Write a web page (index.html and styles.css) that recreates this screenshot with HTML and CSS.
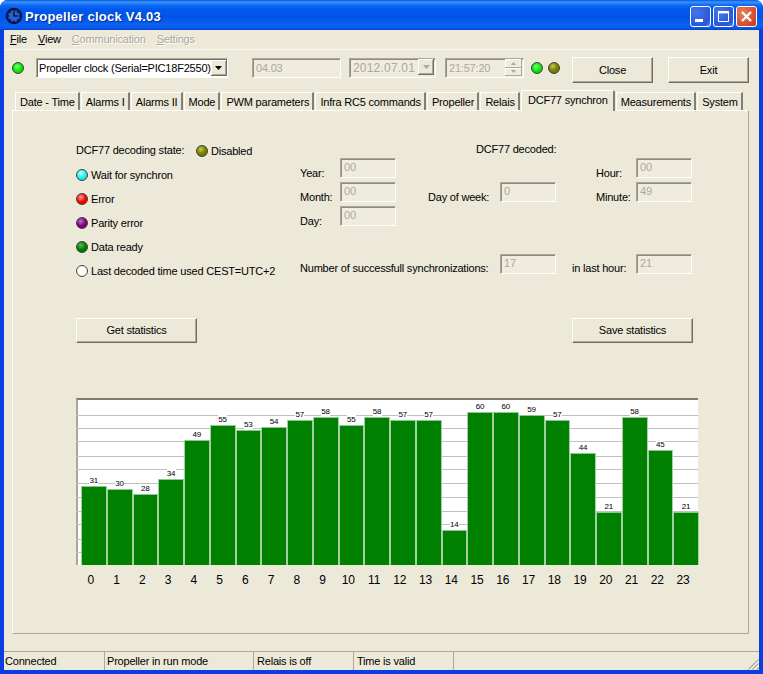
FILE: index.html
```html
<!DOCTYPE html>
<html lang="en">
<head>
<meta charset="utf-8">
<title>Propeller clock V4.03</title>
<link rel="stylesheet" href="styles.css">
</head>
<body>
<div class="window">
  <header class="titlebar">
    <svg class="app-icon" width="18" height="18" viewBox="0 0 18 18">
      <circle cx="9" cy="9" r="7.5" fill="#0b2a78" stroke="#06123c" stroke-width="1.4"/>
      <circle cx="9" cy="9" r="5.6" fill="#2a62d8"/>
      <path d="M9 2.5v2M9 13.5v2M2.5 9h2M13.5 9h2M4.4 4.4l1.4 1.4M12.2 12.2l1.4 1.4M13.6 4.4l-1.4 1.4M5.8 12.2l-1.4 1.4" stroke="#06123c" stroke-width="1.2"/>
      <path d="M9 4.8V9h3.6" fill="none" stroke="#06123c" stroke-width="1.5"/>
    </svg>
    <span class="title-text">Propeller clock V4.03</span>
    <div class="caption-buttons">
      <div class="cap cap-min"><svg width="19" height="19" viewBox="0 0 19 19"><rect x="4" y="12" width="8" height="3" fill="#fff"/></svg></div>
      <div class="cap cap-max"><svg width="19" height="19" viewBox="0 0 19 19"><path d="M4.5 5.5h10v9h-10z" fill="none" stroke="#fff"/><rect x="4" y="4" width="11" height="2.4" fill="#fff"/></svg></div>
      <div class="cap cap-close"><svg width="19" height="19" viewBox="0 0 19 19"><path d="M5 5l9 9M14 5l-9 9" stroke="#fff" stroke-width="2.4"/></svg></div>
    </div>
  </header>

  <div class="client">
    <nav class="menu">
      <span class="menu-item"><u>F</u>ile</span>
      <span class="menu-item"><u>V</u>iew</span>
      <span class="menu-item off"><u>C</u>ommunication</span>
      <span class="menu-item off"><u>S</u>ettings</span>
    </nav>

    <div class="toolbar">
      <span class="led led-lime led-first"></span>
      <div class="combo"><span class="combo-text">Propeller clock (Serial=PIC18F2550)</span><span class="arrow-btn"><svg width="7" height="4" viewBox="0 0 7 4"><path d="M0 0h7L3.5 4z" fill="#000"/></svg></span></div>
      <div class="field tool-field field-version">04.03</div>
      <div class="field tool-field field-date"><span>2012.07.01</span><span class="arrow-btn arrow-off"><svg width="7" height="4" viewBox="0 0 7 4"><path d="M0 0h7L3.5 4z" fill="#aca899"/></svg></span></div>
      <div class="field tool-field field-time"><span>21:57:20</span><span class="spin"><i class="spin-part"><svg width="5" height="3" viewBox="0 0 5 3"><path d="M0 3h5L2.5 0z" fill="#aca899"/></svg></i><i class="spin-part"><svg width="5" height="3" viewBox="0 0 5 3"><path d="M0 0h5L2.5 3z" fill="#aca899"/></svg></i></span></div>
      <span class="led led-lime led-a"></span>
      <span class="led led-olive led-b"></span>
      <div class="btn btn-close">Close</div>
      <div class="btn btn-exit">Exit</div>
    </div>

    <div class="tabs">
      <span class="tab">Date - Time</span>
      <span class="tab">Alarms I</span>
      <span class="tab">Alarms II</span>
      <span class="tab">Mode</span>
      <span class="tab">PWM parameters</span>
      <span class="tab">Infra RC5 commands</span>
      <span class="tab">Propeller</span>
      <span class="tab">Relais</span>
      <span class="tab active">DCF77 synchron</span>
      <span class="tab">Measurements</span>
      <span class="tab">System</span>
    </div>

    <main class="panel">
      <section class="form">
        <div class="states">
          <div class="state-row"><span class="state-head">DCF77 decoding state:</span><span class="led led-olive"></span><span>Disabled</span></div>
          <div class="state-row"><span class="led led-aqua"></span><span>Wait for synchron</span></div>
          <div class="state-row"><span class="led led-red"></span><span>Error</span></div>
          <div class="state-row"><span class="led led-purple"></span><span>Parity error</span></div>
          <div class="state-row"><span class="led led-green"></span><span>Data ready</span></div>
          <div class="state-row"><span class="led led-white"></span><span>Last decoded time used CEST=UTC+2</span></div>
        </div>
        <div class="decoded">
          <span class="decoded-head">DCF77 decoded:</span>

          <span class="lbl c1 r2">Year:</span><div class="field c2 r2">00</div>
          <span class="lbl c7 r2">Hour:</span><div class="field c8 r2">00</div>

          <span class="lbl c1 r3">Month:</span><div class="field c2 r3">00</div>
          <span class="lbl c4 r3">Day of week:</span><div class="field c5 r3">0</div>
          <span class="lbl c7 r3">Minute:</span><div class="field c8 r3">49</div>

          <span class="lbl c1 r4">Day:</span><div class="field c2 r4">00</div>

          <span class="lbl count-lbl r6">Number of successfull synchronizations:</span><div class="field c5 r6">17</div>
          <span class="lbl hour-lbl r6">in last hour:</span><div class="field c8 r6">21</div>
        </div>
      </section>

      <div class="actions">
        <div class="btn btn-wide">Get statistics</div>
        <div class="btn btn-wide">Save statistics</div>
      </div>

      <section class="chart">
        <div class="plot">
          <i class="grid" style="top:15px"></i><i class="grid" style="top:28px"></i><i class="grid" style="top:41px"></i><i class="grid" style="top:56px"></i><i class="grid" style="top:69px"></i><i class="grid" style="top:83px"></i><i class="grid" style="top:97px"></i><i class="grid" style="top:111px"></i><i class="grid" style="top:124px"></i><i class="grid" style="top:139px"></i><i class="grid" style="top:152px"></i>
          <div class="bars">
            <div class="col"><span class="val">31</span><div class="bar" style="height:79px"></div></div>
            <div class="col"><span class="val">30</span><div class="bar" style="height:76px"></div></div>
            <div class="col"><span class="val">28</span><div class="bar" style="height:71px"></div></div>
            <div class="col"><span class="val">34</span><div class="bar" style="height:86px"></div></div>
            <div class="col"><span class="val">49</span><div class="bar" style="height:125px"></div></div>
            <div class="col"><span class="val">55</span><div class="bar" style="height:140px"></div></div>
            <div class="col"><span class="val">53</span><div class="bar" style="height:135px"></div></div>
            <div class="col"><span class="val">54</span><div class="bar" style="height:138px"></div></div>
            <div class="col"><span class="val">57</span><div class="bar" style="height:145px"></div></div>
            <div class="col"><span class="val">58</span><div class="bar" style="height:148px"></div></div>
            <div class="col"><span class="val">55</span><div class="bar" style="height:140px"></div></div>
            <div class="col"><span class="val">58</span><div class="bar" style="height:148px"></div></div>
            <div class="col"><span class="val">57</span><div class="bar" style="height:145px"></div></div>
            <div class="col"><span class="val">57</span><div class="bar" style="height:145px"></div></div>
            <div class="col"><span class="val">14</span><div class="bar" style="height:35px"></div></div>
            <div class="col"><span class="val">60</span><div class="bar" style="height:153px"></div></div>
            <div class="col"><span class="val">60</span><div class="bar" style="height:153px"></div></div>
            <div class="col"><span class="val">59</span><div class="bar" style="height:150px"></div></div>
            <div class="col"><span class="val">57</span><div class="bar" style="height:145px"></div></div>
            <div class="col"><span class="val">44</span><div class="bar" style="height:112px"></div></div>
            <div class="col"><span class="val">21</span><div class="bar" style="height:53px"></div></div>
            <div class="col"><span class="val">58</span><div class="bar" style="height:148px"></div></div>
            <div class="col"><span class="val">45</span><div class="bar" style="height:115px"></div></div>
            <div class="col"><span class="val">21</span><div class="bar" style="height:53px"></div></div>
          </div>
        </div>
        <div class="axis">
          <span>0</span><span>1</span><span>2</span><span>3</span><span>4</span><span>5</span><span>6</span><span>7</span><span>8</span><span>9</span><span>10</span><span>11</span><span>12</span><span>13</span><span>14</span><span>15</span><span>16</span><span>17</span><span>18</span><span>19</span><span>20</span><span>21</span><span>22</span><span>23</span>
        </div>
      </section>
    </main>

    <footer class="status">
      <span class="cell cell-a">Connected</span>
      <span class="cell cell-b">Propeller in run mode</span>
      <span class="cell cell-c">Relais is off</span>
      <span class="cell cell-c">Time is valid</span>
      <span class="cell cell-rest"><svg class="grip" width="12" height="12" viewBox="0 0 12 12"><path d="M11.5 1.5L1.5 11.5M11.5 5.5L5.5 11.5M11.5 9.5L9.5 11.5" stroke="#aca899" stroke-width="1.2"/><path d="M11.5 3.5L3.5 11.5M11.5 7.5L7.5 11.5" stroke="#fff" stroke-width="1"/></svg></span>
    </footer>
  </div>
</div>
</body>
</html>
```

FILE: styles.css
```css
* { box-sizing: border-box; }
html, body { margin: 0; padding: 0; background: #fff; }
body { font-family: "Liberation Sans", Arial, sans-serif; font-size: 11px; letter-spacing: -.2px; color: #000; }

.window {
  width: 763px; height: 674px; overflow: hidden;
  display: flex; flex-direction: column;
  border-radius: 8px 8px 0 0;
  background: #0a3ee0;
}

/* Title bar */
.titlebar {
  height: 30px; flex: none;
  display: flex; align-items: center;
  padding: 0 6px 0 5px;
  background: linear-gradient(180deg, #0a55d8 0, #3a93ff 2px, #0f6cf2 5px, #0058ee 9px, #0055e5 18px, #0a62f2 25px, #0a5ae8 28px, #0340cc 30px);
}
.app-icon { flex: none; margin-top: 2px; }
.title-text {
  margin-left: 2px; margin-top: 3px;
  font-size: 13px; font-weight: 700; letter-spacing: .25px; color: #fff;
  text-shadow: 1px 1px 1px #0a2a90;
}
.caption-buttons { margin-left: auto; display: flex; gap: 2px; margin-top: 2px; }
.cap {
  width: 21px; height: 21px; border: 1px solid #fff; border-radius: 3px;
  display: flex;
  background: radial-gradient(circle at 30% 30%, #3f78ee, #2a55d5 75%, #5a86ee);
}
.cap-close { background: radial-gradient(circle at 30% 30%, #e8805e, #d5492a 70%, #b8381a); }

/* Client */
.client {
  flex: 1; margin: 0 4px 4px; background: #ece9d8;
  display: flex; flex-direction: column; min-height: 0;
}
.menu {
  height: 20px; flex: none; display: flex; align-items: center;
  padding: 0 0 1px 6px; border-bottom: 1px solid #f8f7f0;
}
.menu-item { margin-right: 11px; }
.menu-item.off { color: #aca899; text-shadow: 1px 1px 0 #fff; }

.toolbar { height: 42px; flex: none; display: flex; align-items: flex-start; padding: 8px 0 0 8px; }
.led-first { margin: 4px 12px 0 0; }
.led-a { margin: 4px 5px 0 7px; }
.led-b { margin: 4px 12px 0 0; }

.led {
  display: inline-block; flex: none;
  width: 12px; height: 12px; border-radius: 50%;
  border: 1px solid #3c3c34;
  box-shadow: 0 0 0 .5px #f8f8f0;
}
.led-lime   { background: radial-gradient(circle at 42% 38%, #a0ff90 0, #10f010 40%, #00c000 100%); }
.led-olive  { background: radial-gradient(circle at 38% 32%, #c8c860 0, #808000 45%, #6c6c00 100%); }
.led-aqua   { background: radial-gradient(circle at 38% 32%, #c0ffff 0, #20f0f0 50%, #00d8d8 100%); }
.led-red    { background: radial-gradient(circle at 38% 32%, #ffa0a0 0, #ff0000 50%, #e00000 100%); }
.led-purple { background: radial-gradient(circle at 38% 32%, #c070c0 0, #800080 50%, #6a006a 100%); }
.led-green  { background: radial-gradient(circle at 38% 32%, #60b060 0, #008000 50%, #006c00 100%); }
.led-white  { background: #fff; }

/* Sunken fields */
.field {
  height: 20px; padding: 0 0 0 3px; line-height: 17px;
  color: #aca899; background: #efecdd;
  display: flex; justify-content: space-between;
  border-top: 1px solid #aca899; border-left: 1px solid #aca899;
  border-right: 1px solid #fff; border-bottom: 1px solid #fff;
  box-shadow: inset 1px 1px 0 #8d8b7c;
}
.tool-field { line-height: 18px; }
.field-version { width: 89px; margin-left: 24px; }
.field-date { width: 87px; margin-left: 8px; padding-right: 1px; font-size: 12px; letter-spacing: .2px; }
.field-time { width: 79px; margin-left: 9px; padding-right: 1px; }

.combo {
  width: 192px; height: 20px; padding: 0 1px 0 2px;
  display: flex; justify-content: space-between; align-items: center;
  background: #fff; white-space: nowrap;
  border-top: 1px solid #aca899; border-left: 1px solid #aca899;
  border-right: 1px solid #fff; border-bottom: 1px solid #fff;
  box-shadow: inset 1px 1px 0 #716f64;
}
.combo-text { margin-top: -1px; }
.arrow-btn {
  width: 16px; height: 16px; flex: none;
  display: flex; align-items: center; justify-content: center;
  background: #ece9d8;
  box-shadow: inset -1px -1px 0 #716f64, inset 1px 1px 0 #fff, inset -2px -2px 0 #aca899;
}
.spin { width: 17px; display: flex; flex-direction: column; gap: 0; }
.spin-part {
  height: 8.5px; display: flex; align-items: center; justify-content: center;
  box-shadow: inset -1px -1px 0 #aca899, inset 1px 1px 0 #fff;
}

/* Raised buttons */
.btn {
  height: 26px; display: flex; align-items: center; justify-content: center;
  background: #ece9d8;
  border-top: 1px solid #fff; border-left: 1px solid #fff;
  border-right: 1px solid #716f64; border-bottom: 1px solid #716f64;
  box-shadow: inset -1px -1px 0 #aca899;
}
.btn-close { width: 81px; margin-top: -1px; }
.btn-exit { width: 81px; margin: -1px 0 0 15px; }
.btn-wide { width: 121px; height: 25px; padding-bottom: 2px; }

/* Tabs */
.tabs { height: 18px; flex: none; display: flex; align-items: flex-end; padding-left: 11px; position: relative; z-index: 1; }
.tab {
  height: 18px; padding: 2px 3.2px 0 4px; line-height: 14px; white-space: nowrap;
  border-left: 1px solid #fff; border-top: 1px solid #fff;
  border-right: 2px solid #817f72;
  margin-right: 1px;
}
.tab.active {
  height: 21px; margin-bottom: -1px; padding: 2px 5px 0 6px; background: #ece9d8;
  border-radius: 2px 2px 0 0;
}

/* Panel */
.panel {
  width: 737px; height: 524px; flex: none; margin-left: 8px;
  padding: 27px 0 0 63px;
  border-top: 1px solid #fff; border-left: 1px solid #fff;
  border-right: 1px solid #aca899; border-bottom: 1px solid #aca899;
}
.form { display: flex; height: 144px; }
.states { width: 224px; flex: none; }
.state-row { height: 24px; padding-top: 1px; display: flex; align-items: center; gap: 3px; white-space: nowrap; }
.state-head { width: 117px; flex: none; margin-top: -2px; }

.decoded {
  display: grid;
  grid-template-columns: 40px 56px 32px 72px 56px 40px 40px 56px;
  grid-template-rows: 16px 20px 20px 20px 20px 20px;
  row-gap: 4px;
}
.decoded-head { grid-column: 4 / 8; grid-row: 1; margin-left: 48px; line-height: 22px; }
.lbl { align-self: end; line-height: 14px; margin-bottom: -2px; white-space: nowrap; }
.c1 { grid-column: 1; } .c2 { grid-column: 2; } .c4 { grid-column: 4; }
.c5 { grid-column: 5; } .c7 { grid-column: 7; } .c8 { grid-column: 8; }
.r2 { grid-row: 2; } .r3 { grid-row: 3; } .r4 { grid-row: 4; } .r6 { grid-row: 6; }
.count-lbl { grid-column: 1 / 5; margin-bottom: -1px; }
.hour-lbl { grid-column: 6 / 8; margin-left: 16px; margin-bottom: -1px; }

.actions { width: 617px; margin-top: 36px; display: flex; justify-content: space-between; }

/* Chart */
.chart { margin-top: 55px; width: 622px; }
.plot {
  position: relative; height: 167px; background: #fff;
  border-top: 2px solid #7d7b6c; border-left: 2px solid #a8a698;
  padding-left: 4px;
}
.grid { position: absolute; left: -2px; right: 0; height: 1px; background: #c0c0c0; }
.bars { position: relative; height: 100%; display: flex; gap: 2px; }
.col { flex: 1; display: flex; flex-direction: column; align-items: center; justify-content: flex-end; }
.val { font-size: 8px; letter-spacing: 0; line-height: 9px; background: #fff; margin-bottom: 1px; }
.bar {
  align-self: stretch; background: #008000;
  border-top: 1px solid #8fc88f;
  box-shadow: 1px 0 0 #a3d0a3, -1px 0 0 #a3d0a3;
}
.axis { display: flex; gap: 2px; margin: 7px 0 0 3px; width: 616px; font-size: 12px; letter-spacing: 0; line-height: 16px; }
.axis span { flex: 1; text-align: center; }

/* Status bar */
.status { flex: none; height: 19px; margin-top: 17px; display: flex; }
.cell {
  height: 19px; padding: 2px 0 0 2px; line-height: 15px;
  border-top: 1px solid #aca899; border-left: 1px solid #aca899;
  white-space: nowrap; position: relative;
}
.cell-a { width: 100px; border-left: 0; padding-left: 1px; }
.cell-b { width: 149px; }
.cell-c { width: 100px; padding-left: 3px; }
.cell-rest { flex: 1; }
.grip { position: absolute; right: 0; bottom: 0; }
```
